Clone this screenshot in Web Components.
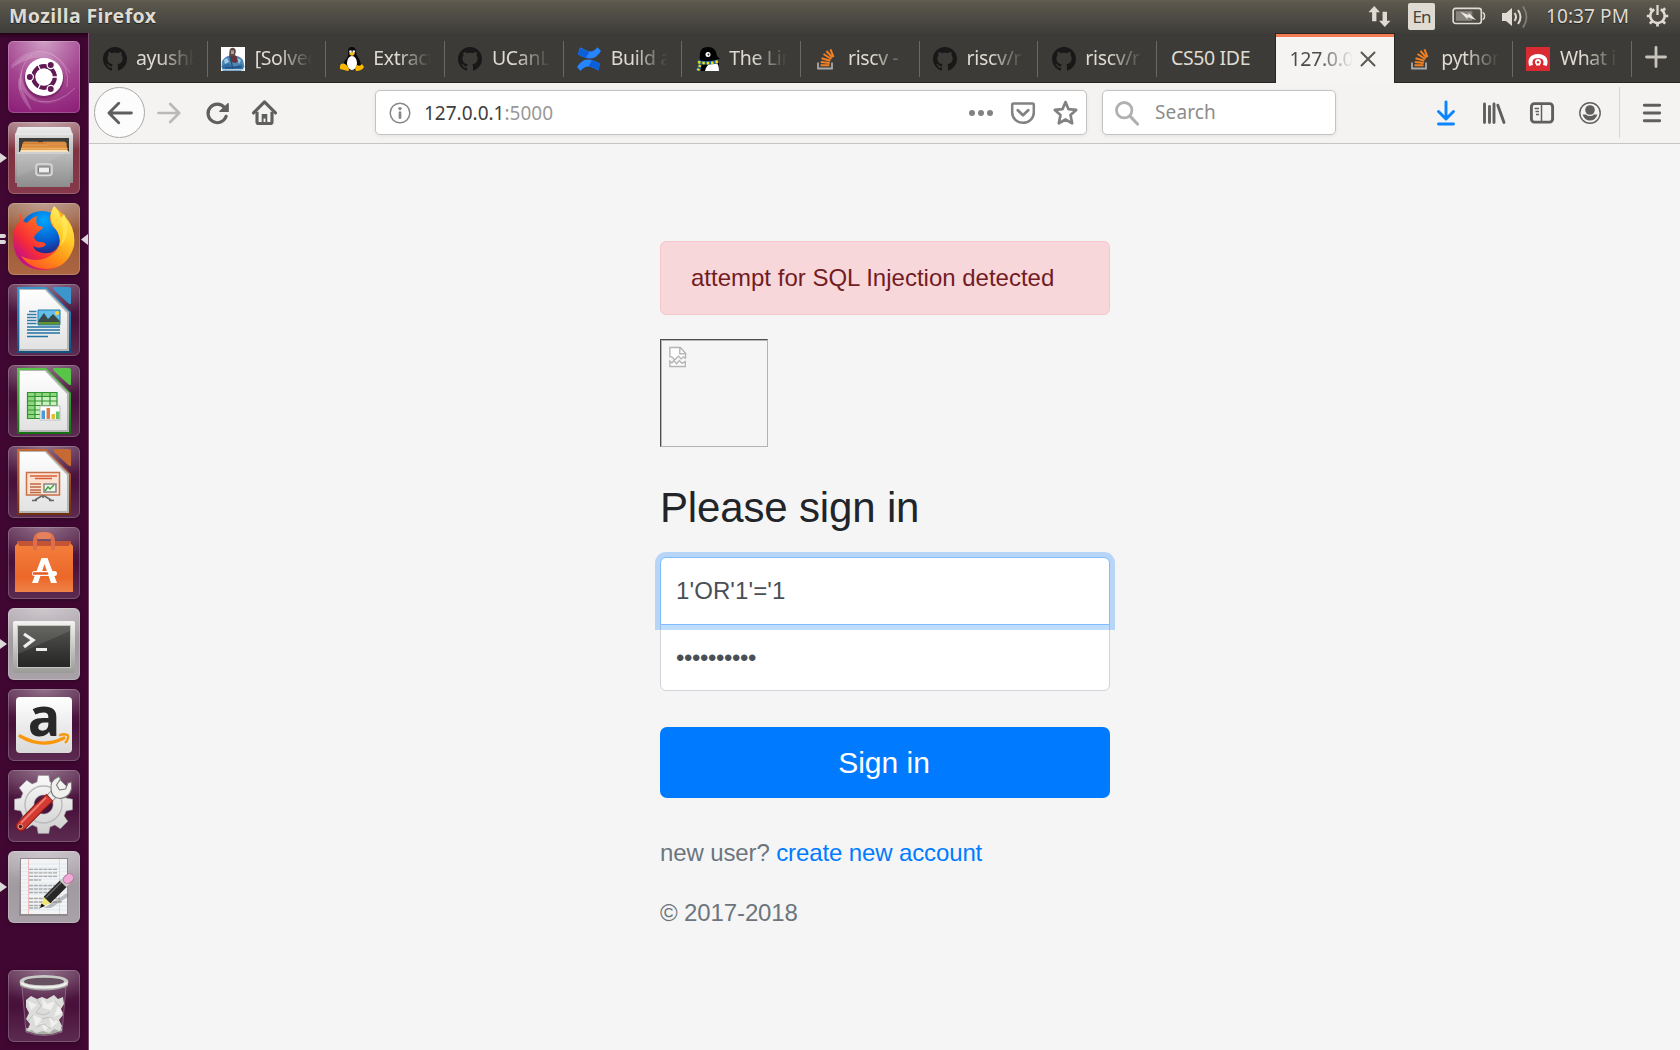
<!DOCTYPE html>
<html lang="en">
<head>
<meta charset="utf-8">
<title>Mozilla Firefox</title>
<style>
html,body{margin:0;height:100%;overflow:hidden;background:#f5f5f5}
body{font-family:"Noto Sans","Open Sans",sans-serif}
</style>
</head>
<body>
<desktop-shell></desktop-shell>
<script>
const svg=(vb,inner)=>`<svg viewBox="${vb}" fill="none" xmlns="http://www.w3.org/2000/svg">${inner}</svg>`;
const octocat='M8 0C3.58 0 0 3.58 0 8c0 3.54 2.29 6.53 5.47 7.59.4.07.55-.17.55-.38 0-.19-.01-.82-.01-1.49-2.01.37-2.53-.49-2.69-.94-.09-.23-.48-.94-.82-1.13-.28-.15-.68-.52-.01-.53.63-.01 1.08.58 1.23.82.72 1.21 1.87.87 2.33.66.07-.52.28-.87.51-1.07-1.78-.2-3.64-.89-3.64-3.95 0-.87.31-1.59.82-2.15-.08-.2-.36-1.02.08-2.12 0 0 .67-.21 2.2.82.64-.18 1.32-.27 2-.27s1.36.09 2 .27c1.53-1.04 2.2-.82 2.2-.82.44 1.1.16 1.92.08 2.12.51.56.82 1.27.82 2.15 0 3.07-1.87 3.75-3.65 3.95.29.25.54.73.54 1.48 0 1.07-.01 1.93-.01 2.2 0 .21.15.46.55.38A8.01 8.01 0 0 0 16 8c0-4.42-3.58-8-8-8z';
const gearPath=(cx,cy,n,r1,r2,w1,w2)=>{let p='';for(let i=0;i<n;i++){const a=i*2*Math.PI/n;
  [[r1,-w1],[r2,-w2],[r2,w2],[r1,w1]].forEach(([r,w])=>{p+=(p?'L':'M')+(cx+r*Math.cos(a+w)).toFixed(1)+' '+(cy+r*Math.sin(a+w)).toFixed(1)})}return p+'Z'};
const office=(c1,c2,art)=>`<defs><linearGradient id="p" x1="0" y1="0" x2="0" y2="1"><stop stop-color="#fff"/><stop offset="1" stop-color="#e2e2e2"/></linearGradient><linearGradient id="b" x1="0" y1="0" x2="0" y2="1"><stop stop-color="${c1}"/><stop offset="1" stop-color="${c2}"/></linearGradient></defs>
<path d="M9 3H38L63 28V69H9Z" fill="url(#b)"/><path d="M11 5H38L61 28V67H11Z" fill="#b5b5b5"/><path d="M12 6H37L59 29V65H12Z" fill="url(#p)"/><path d="M45.500 3H61Q63 3 63 5V20Q61 20.500 59 18L46 6Q44.500 4 45.500 3Z" fill="${c1}"/>${art}`;
const rep=(n,f)=>Array.from({length:n},(_,i)=>f(i)).join('');
const ICONS={
github:svg('0 0 16 16',`<path d="${octocat}" fill="#191717"/>`),
solved:svg('0 0 24 24','<path d="M0 0H24V24H0Z" fill="#fdfdfd"/><path d="M1 14Q5 8 11 9Q18 8 22 13L23.500 20 20 24H2L.5 20Z" fill="#4f86b3"/><path d="M8.500 4Q9 .5 12 .7Q15 1 14.800 5L14 8 16 10 12 14 8 10Z" fill="#5c4a48"/><path d="M10 3.500H13V7H10Z" fill="#b89a8c"/><path d="M10 9H15L18 13 15 16 10 15Z" fill="#66343a"/><path d="M1 19 7 16 12 20 21 17 22 22H2Z" fill="#2d6ea6"/><path d="M3 13 6 11 8 15 4 17ZM16 11 20 13 18 17Z" fill="#9ccbe4"/><path d="M9 10 12 22M4 21 20 20" stroke="#24507e" stroke-width="1.300"/><path d="M1 22.700H23" stroke="#b5cfe0" stroke-width="1.500"/>'),
tux:svg('0 0 24 24','<path d="M8 4Q8 0 12 0Q16 0 16 5Q16 8 19 12Q22 17 20 21L17 23H7L3 20Q3 15 7 11Q9 8 8 4Z" fill="#080808"/><ellipse cx="12" cy="16" rx="5" ry="7" fill="#fff"/><path d="M9 6Q12 4 15 6Q14 9 12 9Q9 8 9 6Z" fill="#f4bb12"/><circle cx="10.500" cy="4.500" r="1.300" fill="#eee"/><circle cx="13.800" cy="4.500" r="1.300" fill="#eee"/><path d="M1 17Q5 15 8 20Q10 23 8 24L0 22Q-1 19 1 17ZM17 18Q20 20 22 17L24 20Q22 24 16 24Q14 21 17 18Z" fill="#f8b900"/>'),
confluence:svg('0 0 24 24','<path d="M2.500 1 4 .5Q10 4.500 13.500 4.500Q17 4.500 20.500 .3L24 4Q19 11.500 14 11.500Q8 11.500 1 7.500Z" fill="#2684ff"/><path d="M3 .8Q9 4.500 12.500 4.500L9 10.800Q5 10 1 7.500Z" fill="#0b5fd8"/><path d="M21.500 23.500Q14 19.500 11.500 19.500Q7 19.500 3.500 24L0 20Q5 12.500 10 12.500Q16 12.500 23 16.500Z" fill="#2684ff"/><path d="M21.500 23.500Q15 19.700 11.500 19.500L15 13.200Q20 14.500 23 16.500Z" fill="#0b5fd8"/>'),
penguin:svg('0 0 24 24','<path d="M4 13Q2 0 12 0Q20 0 21 9L24 12L20 13V15H4Z" fill="#000"/><circle cx="12" cy="7.500" r="2.500" fill="#fff"/><circle cx="12.500" cy="7.500" r=".9" fill="#222"/><path d="M5 16H23V24H5Z" fill="#000"/><path d="M9 24Q10 18 15 16.500H21Q23 18 23 24Z" fill="#fff"/><path d="M1 13Q12 15.500 22 12.500V16.500Q12 18.500 6 17L4 23.500H0L3 17Z" fill="#1765a8"/><path d="M2 15Q12 17.500 22 14.500" stroke="#f7df0b" stroke-width="2.800" stroke-dasharray="2.400 2"/><path d="M4 18 2 23.500" stroke="#f7df0b" stroke-width="2.600" stroke-dasharray="2 2"/>'),
stack:svg('0 0 24 24','<path d="M4 15.500V21.500H18V15.500" stroke="#a7a9ac" stroke-width="1.800"/><g stroke="#f48024" stroke-width="2"><path d="M6.500 18.300H15.500M6.800 14.900 15.700 15.900M7.500 11.300 16.300 13.700M9.500 7 17.300 12M12.500 4 18.500 10.700M16.500 2.300 19.500 10"/></g>'),
acunetix:svg('0 0 24 24','<path d="M0 0H24V24H0Z" fill="#d92b31"/><path d="M5 18.500Q2.500 9.300 12 9Q21.500 9.300 19 18.500" stroke="#fff" stroke-width="4"/><circle cx="12" cy="15" r="3" fill="#fff"/><path d="M10 16V18.500H14V16" fill="#fff"/><circle cx="12" cy="15.200" r="1.200" fill="#d92b31"/>'),
close:svg('0 0 16 16','<path d="M1.500 1.500 14.500 14.500M14.500 1.500 1.500 14.500" stroke="#5a5955" stroke-width="2" stroke-linecap="round"/>'),
plus:svg('0 0 22 22','<path d="M11 1.500V20.500M1.500 11H20.500" stroke="#c8c5bc" stroke-width="2.800" stroke-linecap="round"/>'),
back:svg('0 0 16 16','<path d="M15 8H1.500M7.200 2 1.200 8l6 6" stroke="#5f5f5e" stroke-width="1.800" stroke-linecap="round" stroke-linejoin="round"/>'),
forward:svg('0 0 16 16','<path d="M1 8H14.500M8.800 2 14.800 8l-6 6" stroke="#b9b9b8" stroke-width="1.800" stroke-linecap="round" stroke-linejoin="round"/>'),
reload:svg('0 0 16 16','<path d="M13 4.300A6.200 6.200 0 1 0 14.100 10.200" stroke="#5f5f5e" stroke-width="2.100" stroke-linecap="round"/><path d="M15.500 1.200V7H9.200Z" fill="#5f5f5e"/><path d="M15.500 1.500V7H9.700" stroke="#5f5f5e" stroke-width=".7"/>'),
home:svg('0 0 16 16','<path d="M1 8.300 8 1.200 15 8.300" stroke="#5f5f5e" stroke-width="2" stroke-linecap="round" stroke-linejoin="round"/><path d="M3.200 7.500V14Q3.200 15 4.200 15H11.800Q12.800 15 12.800 14V7.500" stroke="#5f5f5e" stroke-width="2"/><path d="M6.200 9H9.800V15H8.600V11.800H7.400V15H6.200Z" fill="#5f5f5e"/>'),
info:svg('0 0 22 22','<circle cx="11" cy="11" r="9.800" stroke="#888" stroke-width="1.500"/><circle cx="11" cy="6.600" r="1.700" fill="#888"/><path d="M11 10.500V15.700" stroke="#888" stroke-width="2.700" stroke-linecap="round"/>'),
dots:svg('0 0 24 24','<g fill="#828282"><circle cx="3" cy="12" r="3"/><circle cx="12" cy="12" r="3"/><circle cx="21" cy="12" r="3"/></g>'),
pocket:svg('0 0 24 24','<path d="M2.500 2.500H21.500Q22.800 2.500 22.800 4V11.500A10.800 10.300 0 0 1 1.200 11.500V4Q1.200 2.500 2.500 2.500Z" stroke="#828282" stroke-width="2.500"/><path d="M6.800 9.200 12 14.200 17.200 9.200" stroke="#828282" stroke-width="2.800" stroke-linecap="round" stroke-linejoin="round"/>'),
star:svg('0 0 24 24','<path d="M12 2 14.900 8.800 22.300 9.500 16.800 14.400 18.400 22.400 12 18.700 5.600 22.400 7.200 14.400 1.700 9.500 9.100 8.800Z" stroke="#828282" stroke-width="2.600" stroke-linejoin="round"/>'),
search:svg('0 0 24 24','<circle cx="9.200" cy="9.200" r="7.700" stroke="#b0b0b0" stroke-width="2.800"/><path d="M15 15.200 22.500 23" stroke="#b0b0b0" stroke-width="3.200" stroke-linecap="round"/>'),
download:svg('0 0 24 24','<path d="M12 1V17M4.500 10.500 12 18 19.500 10.500M4.500 23H19.500" stroke="#0a84ff" stroke-width="2.900" stroke-linecap="round" stroke-linejoin="round"/>'),
library:svg('0 0 24 24','<path d="M2.500 3V21.500M7.500 5.500V21.500M12 3V21.500M15.800 4.200 22 21.500" stroke="#5f5f5e" stroke-width="2.900" stroke-linecap="round"/>'),
sidebar:svg('0 0 24 24','<rect x="1.400" y="2.600" width="21.200" height="18.500" rx="3" stroke="#5f5f5e" stroke-width="2.900"/><path d="M11.500 3V21" stroke="#5f5f5e" stroke-width="1.500"/><path d="M4.500 7.500H9M5.500 10.500H9M6 13.500H9" stroke="#5f5f5e" stroke-width="1.500"/>'),
account:svg('0 0 24 24','<circle cx="12" cy="12" r="10.200" stroke="#5f5f5e" stroke-width="1.400"/><circle cx="12" cy="9" r="4.800" fill="#5f5f5e"/><path d="M4.600 13.500H8Q9.500 15 12 15Q14.500 15 16 13.500H19.400Q17.500 19.600 12 19.600Q6.500 19.600 4.600 13.500Z" fill="#5f5f5e"/>'),
menu:svg('0 0 24 24','<path d="M4.300 4.200H19.700M4.300 12H19.700M4.300 19.800H19.700" stroke="#5f5f5e" stroke-width="2.900" stroke-linecap="round"/>'),
network:svg('0 0 23 24','<g fill="#dfdbd2"><path d="M6 1 12 7.500H8.300V17H3.800V7.500H0Z"/><path d="M17 23 23 16.500H19.300V7H14.700V16.500H11Z"/></g>'),
battery:svg('0 0 34 20','<rect x="1.200" y="2.200" width="29" height="15.500" rx="2.500" stroke="#dfdbd2" stroke-width="1.700"/><path d="M31.500 6.500Q33.500 6.500 33.500 10Q33.500 13.500 31.500 13.500" stroke="#dfdbd2" stroke-width="1.500"/><path d="M4 5H21V15H4Z" fill="#86847c"/><path d="M8.500 5.500 17 9V6.500L25 14.500 16 11V13.500Z" fill="#eeeae1"/>'),
sound:svg('0 0 26 24','<path d="M0 8H4L10 3V21L4 16H0Z" fill="#dfdbd2"/><path d="M12.500 8Q15.500 12 12.500 16M16 5Q21 12 16 19" stroke="#dfdbd2" stroke-width="2"/><path d="M21 1.500Q28 12 21 22.500" stroke="#817e75" stroke-width="1.800"/>'),
power:svg('0 0 24 24',`<g stroke="#dfdbd2"><path d="M8.700 5.500A7.500 7.500 0 1 0 15.300 5.500" stroke-width="2.600"/><path d="M12 1V11.500" stroke-width="2.300"/><path d="M.8 12.500H4M20 12.500H23.200M4 4.500 6.500 7M20 4.500 17.500 7M4 20.500 6.500 18M20 20.500 17.500 18M12 20.500V23.500" stroke-width="2.800"/></g>`),
broken:svg('0 0 20 24','<path d="M2 2H12.500L18.500 8.500V13L16 11 13.500 14 11 11 8 14.500 5 12 2 11Z" fill="#fff"/><path d="M1.700 12V1.700H13L18.800 8V13.500M12.500 2V8.500H18.500" stroke="#b4b4b4" stroke-width="1.500"/><path d="M1 11.500 4 12 7 15 11 11 14 14 16.500 11.500 19 14" stroke="#b4b4b4" stroke-width="1.400"/><path d="M1.700 22.300V16.500L4 18.500 6 16 9 19.500 12 16 15 19 18.500 17V22.300Z" fill="#fff" stroke="#b4b4b4" stroke-width="1.500"/>'),

dash:svg('0 0 72 72',`<defs><radialGradient id="g" cx=".5" cy="0" r="1.100"><stop stop-color="#cf9fc5"/><stop offset=".55" stop-color="#a3448f"/><stop offset="1" stop-color="#8c1d76"/></radialGradient><linearGradient id="s"><stop stop-color="#fff" stop-opacity=".25"/><stop offset="1" stop-color="#fff" stop-opacity="0"/></linearGradient></defs><rect width="72" height="72" rx="5" fill="url(#g)"/><path d="M2 28Q22 3 45 16Q64 30 58 50Q55 30 36 17Q22 14 2 28Z" fill="url(#s)"/><path d="M24 69Q5 48 14 28Q12 50 32 60Q50 64 69 47Q50 65 34 62Q20 60 14 48" fill="url(#s)"/><path d="M3 25Q20 5 44 13Q63 25 59 46M12 49Q11 22 24 14M23 69Q8 52 11 38M67 47Q50 64 31 60M28 10Q50 10 62 32" stroke="#e3b5da" stroke-opacity=".4" stroke-width="1"/><ellipse cx="36" cy="38" rx="20" ry="19.500" fill="#430f38" opacity=".35"/><circle cx="36" cy="36" r="19" fill="#fff"/><circle cx="36" cy="36" r="10.800" stroke="#601b55" stroke-width="4.200"/><g stroke="#fff" stroke-width="1.300"><path d="M36 36H52M36 36 29 22M36 36 29 50"/></g><circle cx="36" cy="36" r="8.300" fill="#fff"/><g fill="#601b55" stroke="#fff" stroke-width="1.200"><circle cx="21.800" cy="36" r="3.600"/><circle cx="42.700" cy="24" r="3.600"/><circle cx="42.700" cy="48" r="3.600"/></g>`),
files:svg('0 0 72 72',`<defs><linearGradient id="a" x1="0" y1="0" x2="0" y2="1"><stop stop-color="#eee"/><stop offset=".2" stop-color="#d4d4d4"/><stop offset="1" stop-color="#8b8b8b"/></linearGradient><linearGradient id="f" x1="0" y1="0" x2="0" y2="1"><stop stop-color="#bcbcbc"/><stop offset="1" stop-color="#8d8d8d"/></linearGradient><linearGradient id="o" x1="0" y1="0" x2="0" y2="1"><stop stop-color="#ce752b"/><stop offset="1" stop-color="#efb363"/></linearGradient></defs><path d="M10 5H62L65 13V61H7V13Z" fill="url(#a)"/><path d="M7 12H65" stroke="#eee"/><path d="M11 16H61V31H11Z" fill="#3e3c38"/><path d="M15 20H58L60 31H12Z" fill="url(#o)"/><path d="M14 23H39M38 22H59M13 26.500H60M16 20H30M35 20H57" stroke="#f5ba6b" stroke-width=".6"/><path d="M12 30 13 28H59L61 30Z" fill="#f6e2bc"/><path d="M9 30H62V65H9Z" fill="url(#f)"/><path d="M9 31H62" stroke="#ddd"/><path d="M9 30H61L9 55Z" fill="#fff" opacity=".08"/><rect x="28" y="42" width="16" height="11.500" rx="3" fill="#aaa" stroke="#ddd" stroke-width="1.500"/><rect x="30.500" y="45" width="11" height="6" rx="1" fill="#eee" stroke="#777"/>`),
firefox:svg('0 0 72 72',`<defs><linearGradient id="y" x1=".8" y1="0" x2=".3" y2="1"><stop stop-color="#fff36a"/><stop offset=".4" stop-color="#ffca27"/><stop offset=".75" stop-color="#ff8a16"/><stop offset="1" stop-color="#ff5b24"/></linearGradient><linearGradient id="r" x1=".8" y1=".1" x2=".1" y2=".8"><stop stop-color="#ffb01f"/><stop offset=".4" stop-color="#ff6422"/><stop offset=".75" stop-color="#f52b39"/><stop offset="1" stop-color="#c61184"/></linearGradient><radialGradient id="b" cx=".55" cy=".2" r=".8"><stop stop-color="#00a8ff"/><stop offset=".6" stop-color="#0759cc"/><stop offset="1" stop-color="#2e176f"/></radialGradient></defs><circle cx="34" cy="31" r="23" fill="url(#b)"/><path d="M13 10Q10 15 12 18Q4 26 5 38Q7 65 34 67Q58 67 65 45Q69 26 57 13L47 4Q38 14 45 24Q54 31 51 42Q46 52 35 50Q27 49 25 43Q32 47 38 42Q37 39 33 39Q27 39 26 34Q28 30 35 25Q35 23 30 23Q27 20 29 13Q23 15 19 20L15 18Q14 13 13 10Z" fill="url(#r)"/><path d="M46 3Q51 7 53 15L56 11Q57 15 60 18Q68 29 66 43Q60 65 39 66Q22 66 13 53Q29 61 42 53Q52 47 52 38Q51 29 46 24Q39 13 46 3Z" fill="url(#y)"/><path d="M53 16Q58 30 52 43Q61 36 59 21L56 12Z" fill="#ffed60" opacity=".6"/>`),
writer:svg('0 0 72 72',office('#3b96cb','#12527e',`<path d="M21 27.500H28.500M19 30.500H28.500M19 33.500H28.500M19 36.500H28.500M19 39.500H28.500" stroke="#337ba8" stroke-width="1.700"/><path d="M19 43H52M19 46H52M19 49H52M19 52.500H40" stroke="#2273a5" stroke-width="1.700"/><path d="M30 26H52V41H30Z" fill="#63bfea"/><path d="M30 41V37L36 29 40 35 45 30 52 37V41Z" fill="#3a4a4d"/><path d="M30 38H52V41H30Z" fill="#65932b"/><circle cx="49" cy="29" r="2" fill="#ffd42c"/><path d="M30 26H52V41H30Z" stroke="#237fb0"/>`)),
calc:svg('0 0 72 72',office('#58c448','#147014',`<path d="M19 27H49V54H19Z" fill="#c9f0be"/><path d="M19 27H49V31H19ZM19 27H27V54H19Z" fill="#8fd680"/><path d="M19.500 27.500H49V53.500H19.500ZM27 27V54M34 27V54M42 27V54M19 31.500H49M19 36H49M19 40.500H49M19 45H49M19 49.500H49" stroke="#309330" stroke-width="1.200"/><path d="M32 41H52V55H32Z" fill="#fff" stroke="#bbb"/><path d="M33.500 45.500H37V54H33.500Z" fill="#459bd6"/><path d="M38.500 43H42V54H38.500Z" fill="#e07a45"/><path d="M43.500 49H47V54H43.500Z" fill="#e5bb31"/><path d="M48 46.500H51.500V54H48Z" fill="#65c56a"/>`)),
impress:svg('0 0 72 72',office('#c66a34','#703010',`<path d="M18.500 26.500H51.500V49H18.500Z" fill="#fce2d1" stroke="#c97048" stroke-width="1.500"/><path d="M22 30H49M27 32.500H44" stroke="#d85d36" stroke-width="1.600"/><path d="M22 38H33M22 41H33M22 44H33M22 46.500H33" stroke="#bb6a47" stroke-width="1.400"/><path d="M36 38H48V46H36Z" fill="#eef7ea" stroke="#858585" stroke-width="1.500"/><path d="M37 45 40 41 42 43 46 39" stroke="#42a342" stroke-width="1.500"/><path d="M35 50V52M27 54 33.500 50H36.500L43 54M24 54.500H29M41 54.500H46" stroke="#666" stroke-width="1.600"/>`)),
software:svg('0 0 72 72',`<defs><linearGradient id="q" x1="0" y1="0" x2="0" y2="1"><stop stop-color="#f5803e"/><stop offset=".7" stop-color="#eb6728"/><stop offset="1" stop-color="#f08349"/></linearGradient></defs><path d="M9 14H63V22H9Z" fill="#b95133"/><path d="M7 19 11 15H61L65 19V65H7Z" fill="url(#q)"/><path d="M9 14H63L61 19H11Z" fill="#c35434"/><path d="M27 23V15Q27 7 33 7H39Q45 7 45 15V23" stroke="#dd704a" stroke-width="4"/><path d="M28 9Q31 5 36 5Q41 5 44 9L42 12H30Z" fill="#e5815d"/><path d="M24 56 33.500 31H39.500L49 56H43L36.500 37 30 56Z" fill="#fff"/><rect x="24" y="44" width="25" height="5" rx="2.500" fill="#fff"/><path d="M26 46.500H39" stroke="#e65a23" stroke-width="2.600" stroke-linecap="round"/>`),
terminal:svg('0 0 72 72',`<defs><linearGradient id="t" x1="0" y1="0" x2="0" y2="1"><stop stop-color="#f3f3f2"/><stop offset="1" stop-color="#9b9b98"/></linearGradient><linearGradient id="u" x1="0" y1="0" x2="0" y2="1"><stop stop-color="#53534f"/><stop offset="1" stop-color="#252625"/></linearGradient></defs><rect x="5" y="13" width="62" height="52" rx="2" fill="url(#t)"/><rect x="9" y="17" width="54" height="43" fill="#c5c5c2"/><rect x="10" y="18" width="52" height="41" fill="url(#u)"/><path d="M10 18H62V23L10 46Z" fill="#fff" opacity=".1"/><path d="M16 26 25 32 16 39" stroke="#eee" stroke-width="3.300"/><path d="M28 41.500H39" stroke="#eee" stroke-width="3"/>`),
amazon:svg('0 0 72 72',`<defs><linearGradient id="z" x1="0" y1="0" x2="0" y2="1"><stop stop-color="#fff"/><stop offset="1" stop-color="#d9d9d9"/></linearGradient></defs><rect x="8" y="8" width="56" height="56" rx="4" fill="url(#z)"/><path d="M12 47Q34 60 56 49" stroke="#f9970b" stroke-width="3.200" stroke-linecap="round"/><path d="M51 46.500Q57 44 60 46.500Q61 50 57 54" stroke="#f9970b" stroke-width="2.300"/><text x="36" y="46.500" text-anchor="middle" font-family="Open Sans,sans-serif" font-weight="700" font-size="54" fill="#282828">a</text>`),
settings:svg('0 0 72 72',`<defs><linearGradient id="k" x1="0" y1="0" x2="0" y2="1"><stop stop-color="#fafafa"/><stop offset="1" stop-color="#cfcfcf"/></linearGradient></defs><path fill-rule="evenodd" d="${gearPath(35.5,34.5,8,23.5,29.5,.28,.18)}M35.500 25A9.500 9.500 0 1 0 35.600 25Z" fill="url(#k)" stroke="#999" stroke-width=".6"/><circle cx="35.500" cy="34.500" r="18.500" stroke="#b8b8b8" stroke-width="1.300"/><path d="M41 29 48 21.500" stroke="#888" stroke-width="8.500"/><path d="M41 29 49 20.500" stroke="#eee" stroke-width="7"/><path d="M51 6.500Q42 10 43 18.500Q43 28 52 28.500Q61 28 63.500 19V12L60 13 57.500 19 51.500 20 48.500 15 52.500 9Z" fill="#f0f0ee" stroke="#777" stroke-width="1.100" stroke-linejoin="round"/><path d="M13 56 30 38.500" stroke="#8d1a16" stroke-width="10.500" stroke-linecap="round"/><path d="M28 40.500 42 27.500" stroke="#8d1a16" stroke-width="10"/><path d="M13 56 30 38.500" stroke="#d23a32" stroke-width="8.500" stroke-linecap="round"/><path d="M28.500 40 41.500 28" stroke="#d23a32" stroke-width="8"/><path d="M13 53 38 27.500" stroke="#ee7d73" stroke-width="1.800"/><circle cx="12.500" cy="56.500" r="2.200" fill="#501513" stroke="#e9bdb8" stroke-width=".8"/>`),
gedit:svg('0 0 72 72',`<path d="M12 7H60V65H11Z" fill="#8d898d"/><path d="M13 8H59V63H13Z" fill="#f4f4f4"/>${rep(13,i=>`<path d="M13 ${13+i*3.8}H59" stroke="#dbe7f4" stroke-width=".8"/>`)}<path d="M20.500 8V63" stroke="#efbabb" stroke-width="1"/><path d="M51.500 8V63" stroke="#c2d7ef" stroke-width=".8"/>${[[18.3,50],[21.8,49],[25.3,50],[29,33],[34.500,50],[38,49],[41.500,46],[47.500,52],[51,54],[54.500,35],[57,32]].map(([y,x])=>`<path d="M21 ${y}H${x}" stroke="#aaa" stroke-width="1.300" stroke-dasharray="4 .8"/>`).join('')}<path d="M36 57 59 42 61 45 43 57Z" fill="#777" opacity=".45"/><path d="M33 56 36 46 43 52Z" fill="#f1e777"/><path d="M32 57 33.500 52.500 37 55Z" fill="#111"/><path d="M39 49 56 32" stroke="#272727" stroke-width="9.500"/><path d="M38 46.500 54 30.500" stroke="#666" stroke-width="1.500"/><path d="M55 33 59 29" stroke="#c9c9c9" stroke-width="9.500"/><path d="M59.500 28.500 61.500 26.800" stroke="#b96a9d" stroke-width="9" stroke-linecap="round"/><path d="M59.500 28.500 61.500 26.800" stroke="#efa9d6" stroke-width="7.500" stroke-linecap="round"/>`),
trash:svg('0 0 72 72',`<path d="M14 17 18 62Q36 69 54 62L58 17Z" fill="#d6c3d3" fill-opacity=".1" stroke="#b59db0" stroke-opacity=".5"/><path d="M18 61Q36 68 54 61V58H18Z" fill="#a9b0a6"/><path d="M18 30 23 26 29 29 34 27 39 29 46 25 50 29 55 27 56 34 53 39 55 45 51 50 54 56 52 61 46 59 41 63 35 61 28 63 24 60 19 61 22 54 18 49 21 43 18 37Z" fill="#dcdddb"/><path d="M20 31 29 35 23 40ZM34 28 39 34 47 31 43 40 35 38ZM50 35 46 47 55 43ZM25 45 34 49 28 57ZM41 46 43 58 50 52ZM32 53 37 61 41 56Z" fill="#f0f0ef"/><path d="M29 29 33 36 28 43 36 45 42 42M25 45 20 51M34 49 42 47 47 51M47 31 52 37M28 57 36 54 43 59" stroke="#bfc1be" stroke-width="1"/><ellipse cx="36" cy="12" rx="22.500" ry="5" stroke="#c9cbc7" stroke-width="4"/><path d="M12 13V16Q22 20.500 36 20.500Q50 20.500 60 16V13Q50 17 36 17Q22 17 12 13Z" fill="#a3a5a2"/><path d="M13 13Q18 17.500 36 17.500Q54 17.500 59 13" stroke="#efefec" stroke-width="2.500"/><ellipse cx="36" cy="11.500" rx="20" ry="3.800" fill="#67505f"/>`)
};
const define=(name,html,after)=>customElements.define(name,class extends HTMLElement{
  connectedCallback(){ if(this.shadowRoot) return; const r=this.attachShadow({mode:'open'}); r.innerHTML=typeof html==='function'?html(this):html; if(after) after(this,r); }
});

define('ui-icon',e=>`<style>:host{display:block;flex:none;width:${e.getAttribute('w')||24}px;height:${e.getAttribute('h')||e.getAttribute('w')||24}px}svg{display:block;width:100%;height:100%;overflow:visible}</style>${ICONS[e.getAttribute('name')]}`);

/* Label whose tracking is tuned so that the text fills a given width. */
define('fit-text',e=>`<style>:host{display:block;flex:none;white-space:nowrap}span{display:inline-block}</style><span><slot></slot></span>`,(e,r)=>{
  const s=r.querySelector('span'),w=+e.getAttribute('w');
  s.style.letterSpacing=((w-s.getBoundingClientRect().width)/e.textContent.length)+'px';
});

define('top-panel',`<style>
:host{display:flex;align-items:center;height:33px;box-sizing:border-box;padding:0 11px 0 9px;background:linear-gradient(#625f50,#5a574c 3px,#3f3e3a);color:#dfdbd2;font-size:19px;line-height:30px;text-shadow:0 1px 1px #222}
.title{font-weight:700;flex:1;font-size:19.5px}
.lang{box-sizing:border-box;width:27px;height:27px;border-radius:2px;background:#dfdbd2;color:#45433d;font-size:17px;line-height:27px;text-shadow:none;display:flex;justify-content:center;margin:0 17px}
.lang fit-text{top:0}
fit-text{position:relative;top:-1px}
</style><fit-text class="title" w="147.5">Mozilla Firefox</fit-text>
<ui-icon name="network" w="23"></ui-icon><div class="lang"><fit-text w="18">En</fit-text></div><ui-icon name="battery" w="33" h="20" style="margin-top:-1px"></ui-icon><ui-icon name="sound" w="26" h="24" style="margin:0 18px 0 17px"></ui-icon><fit-text w="83" style="margin-right:17px">10:37 PM</fit-text><ui-icon name="power" w="23" h="23" style="margin-top:-2px"></ui-icon>`);

define('launcher-tile',e=>`<style>
:host{display:block;position:relative;width:72px;height:72px;flex:none}
.tile{width:72px;height:72px;box-sizing:border-box;border-radius:6px;background:radial-gradient(ellipse 60px 32px at 50% 0,rgba(255,255,255,.34),rgba(255,255,255,0)),${e.getAttribute('tint')||'linear-gradient(rgba(255,255,255,.13),rgba(255,255,255,.04) 50%,rgba(255,255,255,.15))'};box-shadow:0 1px 4px rgba(0,0,0,.35)}
.tile::after{content:"";position:absolute;inset:0;border:1px solid rgba(255,255,255,.2);border-radius:6px}
.run,.focus,.pip{position:absolute;background:#dbd9d9}
.run{left:-8px;top:31px;width:7px;height:10px;clip-path:polygon(0 0,100% 50%,0 100%)}
.focus{left:73px;top:31px;width:7px;height:11px;clip-path:polygon(100% 0,0 50%,100% 100%)}
.pip{left:-8px;width:6px;height:4px;border-radius:0 2px 2px 0}
</style><div class="tile"><ui-icon name="${e.getAttribute('icon')}" w="72"></ui-icon></div>${e.hasAttribute('running')?'<i class="run"></i>':''}${e.hasAttribute('focused')?'<i class="pip" style="top:31px"></i><i class="pip" style="top:37px"></i><i class="focus"></i>':''}`);

define('unity-launcher',`<style>
:host{display:flex;flex-direction:column;gap:9px;box-sizing:border-box;width:89px;padding:8px 8px 8px;background:linear-gradient(#240219,#410733 6px);border-right:1px solid #7b4a70}
launcher-tile:last-of-type{margin-top:auto}
</style>
<launcher-tile icon="dash"></launcher-tile>
<launcher-tile icon="files" running tint="linear-gradient(#a07078,#803241 40%,#85394a)"></launcher-tile>
<launcher-tile icon="firefox" focused tint="linear-gradient(#a07058,#9a5836 40%,#ac6642)"></launcher-tile>
<launcher-tile icon="writer"></launcher-tile><launcher-tile icon="calc"></launcher-tile><launcher-tile icon="impress"></launcher-tile><launcher-tile icon="software"></launcher-tile>
<launcher-tile icon="terminal" running tint="linear-gradient(#b5adb4,#a29aa1 50%,#aaa2a9)"></launcher-tile>
<launcher-tile icon="amazon"></launcher-tile><launcher-tile icon="settings"></launcher-tile>
<launcher-tile icon="gedit" running tint="linear-gradient(#b5adb4,#a29aa1 50%,#aaa2a9)"></launcher-tile>
<launcher-tile icon="trash"></launcher-tile>`);

define('browser-tab',e=>`<style>
:host{display:flex;position:relative;align-items:center;box-sizing:border-box;flex:none;width:118.67px;height:49px;padding:0 14px;color:#dfdbd2;font-size:19.5px;letter-spacing:-.35px;line-height:26px}
:host([active]){background:#f5f4f2;color:#4c4c4b;height:50px;border-top:1px solid #282724;box-shadow:inset 0 3px #f37b52,-1px 0 #282724,1px 0 #282724}
:host(:not([active]):not([nosep]))::after{content:"";position:absolute;right:0;top:8px;width:1px;height:36px;background:#6a6964}
ui-icon{margin:3px 9.500px 0 -.5px}
.label{flex:1;min-width:0;overflow:hidden;white-space:nowrap}
.fade{-webkit-mask-image:linear-gradient(90deg,#000 calc(100% - 34px),transparent);mask-image:linear-gradient(90deg,#000 calc(100% - 34px),transparent)}
:host([active]) .label{margin-right:7px}:host([active]) ui-icon{margin:1px 4px 0 0}
</style>${e.hasAttribute('icon')?`<ui-icon name="${e.getAttribute('icon')}" w="24"></ui-icon>`:''}<div class="label ${e.hasAttribute('short')?'':'fade'}"><slot></slot></div>${e.hasAttribute('active')?'<ui-icon name="close" w="16"></ui-icon>':''}`);

define('tab-strip',`<style>:host{display:flex;align-items:flex-start;height:50px;box-sizing:border-box;background:linear-gradient(#282724,#282724) 0 100%/100% 1px no-repeat,#3c3b37}
.new{margin:13px 0 0 13px}</style>
<browser-tab icon="github">ayushb</browser-tab><browser-tab icon="solved">[Solved</browser-tab><browser-tab icon="tux">Extract</browser-tab><browser-tab icon="github">UCanL</browser-tab><browser-tab icon="confluence">Build a</browser-tab><browser-tab icon="penguin">The Lin</browser-tab><browser-tab icon="stack">riscv -</browser-tab><browser-tab icon="github">riscv/r</browser-tab><browser-tab icon="github">riscv/r</browser-tab><browser-tab short nosep>CS50 IDE</browser-tab><browser-tab active>127.0.0.</browser-tab><browser-tab icon="stack">python</browser-tab><browser-tab icon="acunetix">What is</browser-tab><ui-icon class="new" name="plus" w="22"></ui-icon>`);

define('nav-bar',`<style>
:host{display:flex;align-items:center;height:61px;box-sizing:border-box;padding:0 16px 1px 5px;border-bottom:1px solid #c6c5c4;background:#f4f3f1;font-size:19px}
.back{box-sizing:border-box;width:51px;height:51px;border:1px solid #a9a9a8;border-radius:50%;background:#fcfcfc;display:flex;align-items:center;justify-content:center;flex:none}
.field{display:flex;align-items:center;box-sizing:border-box;height:45px;border:1px solid #c4c3c2;border-radius:5px;background:#fff;box-shadow:0 1px 4px rgba(0,0,0,.07);flex:none}
.url{width:712px;margin-left:98px;padding:0 8px 0 13px;color:#3e3e3d}
.url fit-text{margin:0 auto 0 13px}.url b{font-weight:400;color:#999}
.search{width:234px;margin-left:15px;padding-left:12px;color:#8c8c8b}
.tools{display:flex;gap:24px;margin-left:98px;align-items:center}
.sep{width:1px;height:51px;background:#d7d6d5;margin:0 20px 0 17px}
</style><div class="back"><ui-icon name="back" w="26"></ui-icon></div><ui-icon name="forward" w="24" style="margin-left:12px"></ui-icon><ui-icon name="reload" w="24" style="margin-left:24px"></ui-icon><ui-icon name="home" w="25" style="margin-left:23px"></ui-icon>
<div class="field url"><ui-icon name="info" w="22"></ui-icon><fit-text w="129">127.0.0.1<b>:5000</b></fit-text><ui-icon name="dots"></ui-icon><ui-icon name="pocket" style="margin:0 18px"></ui-icon><ui-icon name="star" w="25"></ui-icon></div>
<div class="field search"><ui-icon name="search" w="24" h="24"></ui-icon><fit-text w="61" style="margin:-2px 0 0 16px">Search</fit-text></div>
<div class="tools"><ui-icon name="download"></ui-icon><ui-icon name="library"></ui-icon><ui-icon name="sidebar"></ui-icon><ui-icon name="account"></ui-icon></div><i class="sep"></i><ui-icon name="menu"></ui-icon>`);

define('alert-box',`<style>:host{display:block;box-sizing:border-box;height:74px;padding:18px 30px;border:1px solid #f5c6cb;border-radius:6px;background:#f8d7da;color:#721c24;line-height:36px}</style><slot></slot>`);
define('text-field',`<style>:host{display:flex;align-items:center;box-sizing:border-box;height:67px;margin-top:-1px;padding:0 15px;border:1px solid #ced4da;border-radius:0 0 6px 6px;background:#fff;color:#495057}
:host([focused]){height:68px;margin-top:0;border-color:#80bdff;border-radius:6px 6px 0 0;box-shadow:0 0 0 5px rgba(0,123,255,.25);position:relative;z-index:1;padding-bottom:1px}</style><slot></slot>`);
define('login-page',`<style>
:host{display:block;flex:1;box-sizing:border-box;padding:97px 0 0 571px;background:#f5f5f5;font:24px/36px "Liberation Sans",Arial,sans-serif;color:#212529}
.form{width:450px}
.img{box-sizing:border-box;width:108px;height:108px;margin:24px 0 36px;padding:6px 0 0 7px;border:1px solid;border-color:#4d4d4d #b2b2b2 #b2b2b2 #4d4d4d;box-shadow:inset 1px 1px rgba(0,0,0,.25)}
h1{margin:0 0 24px;font-size:42px;font-weight:400;line-height:50px;letter-spacing:-.16px}
button{display:block;width:450px;height:71px;margin:36px 0 37px;padding:0 2px 0 0;border:0;border-radius:7px;background:#007bff;color:#fff;font:30px "Liberation Sans",Arial,sans-serif}
p{margin:0 0 24px;color:#6c757d;letter-spacing:-.12px}a{color:#007bff}
</style><div class="form"><alert-box>attempt for SQL Injection detected</alert-box><div class="img"><ui-icon name="broken" w="19" h="22"></ui-icon></div><h1>Please sign in</h1><text-field focused><span style="letter-spacing:.1px">1'OR'1'='1</span></text-field><text-field><span style="letter-spacing:-.4px">••••••••••</span></text-field><button>Sign in</button><p>new user? <a>create new account</a></p><p>© 2017-2018</p></div>`);
define('browser-window',`<style>:host{display:flex;flex-direction:column;min-width:0;flex:1}</style><tab-strip></tab-strip><nav-bar></nav-bar><login-page></login-page>`);
define('desktop-shell',`<style>:host{display:flex;flex-direction:column;width:1680px;height:1050px;overflow:hidden}.work{display:flex;flex:1;min-height:0}</style><top-panel></top-panel><div class="work"><unity-launcher></unity-launcher><browser-window></browser-window></div>`);
</script>
</body>
</html>
